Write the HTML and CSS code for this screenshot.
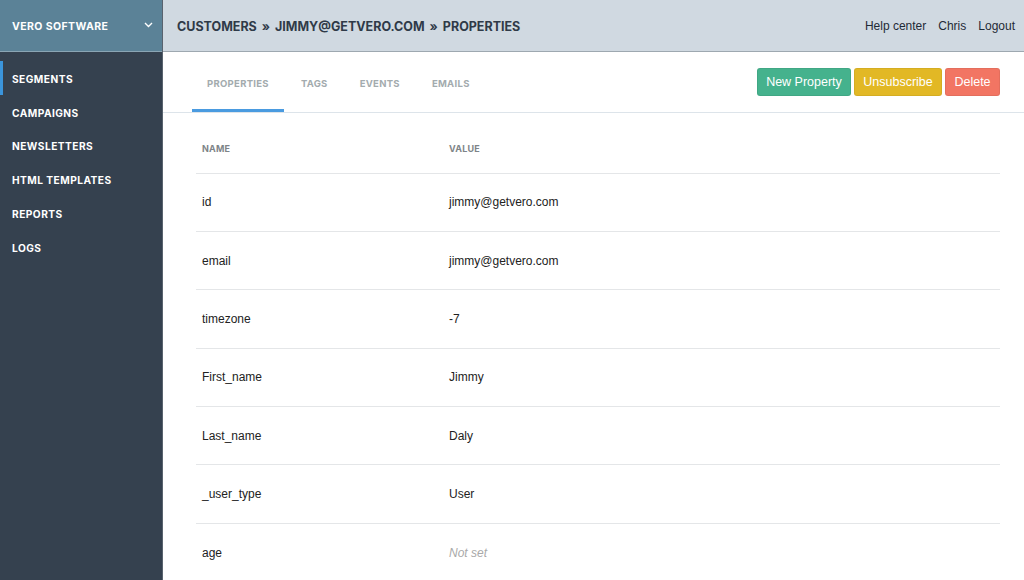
FILE: index.html
```html
<!DOCTYPE html>
<html>
<head>
<meta charset="utf-8">
<link rel="stylesheet" href="styles.css">
</head>
<body>
<div class="app">
  <aside class="sidebar">
    <div class="brand">
      <span>VERO SOFTWARE</span>
      <svg class="chev" width="9" height="6" viewBox="0 0 9 6"><path d="M1 1 L4.5 4.5 L8 1" fill="none" stroke="#fff" stroke-width="1.4"/></svg>
    </div>
    <nav class="nav">
      <a class="nav-item active">SEGMENTS</a>
      <a class="nav-item">CAMPAIGNS</a>
      <a class="nav-item">NEWSLETTERS</a>
      <a class="nav-item">HTML TEMPLATES</a>
      <a class="nav-item">REPORTS</a>
      <a class="nav-item">LOGS</a>
    </nav>
  </aside>
  <main class="main">
    <header class="topbar">
      <div class="crumbs">CUSTOMERS <span class="sep">»</span> JIMMY@GETVERO.COM <span class="sep">»</span> PROPERTIES</div>
      <div class="links"><a>Help center</a><a>Chris</a><a>Logout</a></div>
    </header>
    <div class="tabbar">
      <div class="tabs">
        <a class="tab active">PROPERTIES</a>
        <a class="tab">TAGS</a>
        <a class="tab">EVENTS</a>
        <a class="tab">EMAILS</a>
      </div>
      <div class="actions">
        <button class="btn green">New Property</button>
        <button class="btn yellow">Unsubscribe</button>
        <button class="btn red">Delete</button>
      </div>
    </div>
    <div class="content">
      <table class="props">
        <thead>
          <tr><th class="c1">NAME</th><th>VALUE</th></tr>
        </thead>
        <tbody>
          <tr><td>id</td><td>jimmy@getvero.com</td></tr>
          <tr><td>email</td><td>jimmy@getvero.com</td></tr>
          <tr><td>timezone</td><td>-7</td></tr>
          <tr><td>First_name</td><td>Jimmy</td></tr>
          <tr><td>Last_name</td><td>Daly</td></tr>
          <tr><td>_user_type</td><td>User</td></tr>
          <tr><td>age</td><td class="unset">Not set</td></tr>
        </tbody>
      </table>
    </div>
  </main>
</div>
</body>
</html>
```

FILE: styles.css
```css
* { box-sizing: border-box; }
html, body { margin: 0; padding: 0; height: 100%; overflow: hidden; }
body { font-family: "Liberation Sans", Arial, sans-serif; background: #fff; }
.app { display: flex; height: 580px; overflow: hidden; }

.sidebar { width: 163px; flex: none; background: #35414f; border-right: 1px solid #59636e; display: flex; flex-direction: column; }
.brand { flex: none; height: 52px; background: #5b8297; border-bottom: 1px solid #8aa5b4; display: flex; align-items: center; justify-content: space-between; padding: 0 9px 0 12px; color: #fff; font-family: Inter, sans-serif; font-weight: 700; font-size: 10.5px; letter-spacing: 0.4px; }
.brand span { padding-top: 2px; }
.chev { margin-top: -2px; }
.nav { display: flex; flex-direction: column; padding-top: 10px; }
.nav-item { flex: none; height: 33.8px; display: flex; align-items: center; padding-left: 12px; color: #fff; font-family: Inter, sans-serif; font-weight: 700; font-size: 10.2px; letter-spacing: 0.45px; position: relative; }
.nav-item.active::before { content: ""; position: absolute; left: 0; top: -1px; bottom: 1px; width: 3px; background: #3b95dc; }

.main { flex: 1; display: flex; flex-direction: column; min-width: 0; }
.topbar { flex: none; height: 52px; background: #d0d9e1; border-bottom: 1px solid #9ea8b0; display: flex; align-items: center; justify-content: space-between; padding: 1px 9px 0 14px; }
.crumbs { font-family: Inter, sans-serif; font-weight: 700; font-size: 12.5px; color: #2f3a48; letter-spacing: 0; }
.sep { margin: 0 2px; }
.links { display: flex; gap: 12px; font-size: 12px; color: #1f2a36; }

.tabbar { flex: none; height: 61px; border-bottom: 1px solid #dde4ea; display: flex; justify-content: space-between; padding: 0 24px 0 29px; }
.tabs { display: flex; align-items: stretch; }
.tab { display: flex; align-items: center; padding: 6px 15px 0; font-family: Inter, sans-serif; font-weight: 700; font-size: 9.5px; color: #a3abae; letter-spacing: 0.3px; margin-right: 2px; border-bottom: 3px solid transparent; }
.tab.active { border-bottom-color: #4a9be0; }
.actions { display: flex; gap: 3px; padding-top: 16px; align-items: flex-start; }
.btn { height: 28px; border: 1px solid rgba(0,0,0,0.06); border-radius: 3px; color: #fff; font-family: "Liberation Sans", Arial, sans-serif; font-size: 12.5px; padding: 0; white-space: nowrap; }
.btn.green { background: #45b28d; width: 94px; }
.btn.yellow { background: #e2b825; width: 88px; }
.btn.red { background: #f27563; width: 55px; }

.content { flex: none; padding: 0 24px 0 33px; }
.props { width: 100%; border-collapse: collapse; }
.props th { text-align: left; font-family: Inter, sans-serif; font-weight: 700; font-size: 9px; color: #7e8488; height: 60px; padding: 11px 0 0 6px; border-bottom: 1px solid #e4e6e8; letter-spacing: 0.2px; }
.props th.c1 { width: 247px; }
.props td { height: 58.4px; padding: 0 0 0 6px; font-size: 12px; color: #222; border-bottom: 1px solid #e4e6e8; }
.props td.unset { font-style: italic; color: #a9a9a9; }
```
